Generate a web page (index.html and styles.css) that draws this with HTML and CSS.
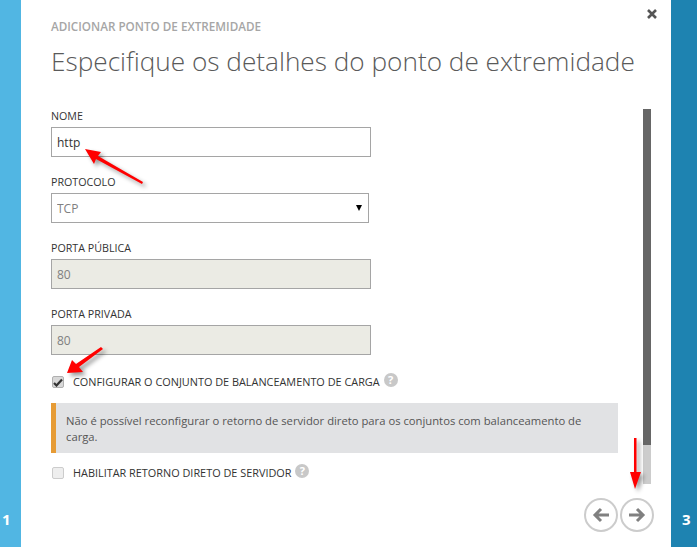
FILE: index.html
```html
<!DOCTYPE html>
<html lang="pt">
<head>
    <meta charset="UTF-8">
    <title>Adicionar ponto de extremidade</title>
    <link rel="stylesheet" href="styles.css">
</head>
<body>
    <div class="side side-left"><span class="step">1</span></div>

    <div class="dialog">
        <a class="close" href="#">
            <svg width="10" height="10" viewBox="0 0 10 10"><path d="M1 1 L9 9 M9 1 L1 9" stroke="#555" stroke-width="2.6"/></svg>
        </a>

        <div class="subtitle">ADICIONAR PONTO DE EXTREMIDADE</div>
        <h1 class="title">Especifique os detalhes do ponto de extremidade</h1>

        <div class="content">
            <div class="form">
                <label class="field-label">NOME</label>
                <input class="field" type="text" value="http">

                <label class="field-label">PROTOCOLO</label>
                <div class="select-wrap">
                    <select class="field field-select"><option>TCP</option></select>
                </div>

                <label class="field-label">PORTA PÚBLICA</label>
                <input class="field field-disabled" type="text" value="80" disabled>

                <label class="field-label">PORTA PRIVADA</label>
                <input class="field field-disabled" type="text" value="80" disabled>

                <div class="check-row check-row-first">
                    <span class="check">
                        <svg width="10" height="9" viewBox="0 0 10 9"><path d="M1 5 L3.5 7.5 L9 1.5" fill="none" stroke="#333" stroke-width="2.2"/></svg>
                    </span>
                    <span class="check-text">CONFIGURAR O CONJUNTO DE BALANCEAMENTO DE CARGA</span>
                    <span class="help">?</span>
                </div>

                <div class="notice">Não é possível reconfigurar o retorno de servidor direto para os conjuntos com balanceamento de carga.</div>

                <div class="check-row check-row-last">
                    <span class="check check-off"></span>
                    <span class="check-text">HABILITAR RETORNO DIRETO DE SERVIDOR</span>
                    <span class="help">?</span>
                </div>
            </div>
            <div class="scrollbar"><div class="scroll-thumb"></div></div>
        </div>

        <div class="nav">
            <a class="nav-btn" href="#">
                <svg width="18" height="16" viewBox="0 0 18 16"><path d="M17 8 H3 M9 2 L3 8 L9 14" fill="none" stroke="#808080" stroke-width="3"/></svg>
            </a>
            <a class="nav-btn" href="#">
                <svg width="18" height="16" viewBox="0 0 18 16"><path d="M1 8 H15 M9 2 L15 8 L9 14" fill="none" stroke="#808080" stroke-width="3"/></svg>
            </a>
        </div>
    </div>

    <div class="side side-right"><span class="step">3</span></div>

    <!-- setas vermelhas por cima da captura -->
    <svg class="marks" width="697" height="547" viewBox="0 0 697 547">
        <path d="M85 149 L101 152 L98 156 L143 182 L142 184 L96 159 L94 164 Z" fill="#f00"/>
        <path d="M67 373 L72 360 L76 364 L101 347 L103 349 L79 367 L83 372 Z" fill="#f00"/>
        <path d="M634 438 H636.500 V472 H641 L635 489 L630 472 H634 Z" fill="#f00"/>
    </svg>
</body>
</html>
```

FILE: styles.css
```css
html, body {
    margin: 0;
    padding: 0;
    height: 100%;
}

body {
    display: flex;
    height: 547px;
    overflow: hidden;
    position: relative;
    background: #fff;
    font-family: "Open Sans", sans-serif;
    color: #333;
}

.side {
    display: flex;
    align-items: flex-end;
    flex: none;
    color: #fff;
    font-weight: 700;
    font-size: 15px;
}

.side-left {
    width: 21px;
    background: #51b6e3;
    padding-left: 2px;
    box-sizing: border-box;
}

.side-right {
    width: 26px;
    background: #1e83b1;
    padding-left: 11px;
    box-sizing: border-box;
}

.step {
    line-height: 20px;
    margin-bottom: 18px;
}

.dialog {
    flex: 1;
    position: relative;
    padding: 19px 0 0 30px;
    box-sizing: border-box;
}

.close {
    position: absolute;
    top: 9px;
    right: 14px;
    line-height: 0;
}

.subtitle {
    font-size: 11.700px;
    font-weight: 600;
    line-height: 14px;
    color: #a6a6a6;
}

.title {
    margin: 10px 0 0;
    font-size: 26.200px;
    font-weight: 300;
    line-height: 36px;
    color: #5a5a5a;
    white-space: nowrap;
}

.content {
    display: flex;
    margin-top: 30px;
    height: 375px;
}

.form {
    width: 592px;
    flex: none;
}

.field-label {
    display: block;
    font-size: 10.700px;
    line-height: 14px;
    margin: 18px 0 4px;
}

.field-label:first-child {
    margin-top: 0;
}

.field {
    display: block;
    box-sizing: border-box;
    width: 320px;
    height: 30px;
    padding: 0 5px;
    border: 1px solid #a5a5a5;
    border-radius: 0;
    background: #fff;
    font-family: "Open Sans", sans-serif;
    font-size: 12px;
    color: #333;
    outline: none;
}

.select-wrap {
    position: relative;
    width: 318px;
}

.select-wrap::after {
    content: "";
    position: absolute;
    right: 7px;
    top: 12px;
    border-left: 3px solid transparent;
    border-right: 3px solid transparent;
    border-top: 6px solid #000;
}

.field-select {
    width: 318px;
    appearance: none;
    color: #808080;
}

.field-disabled {
    background: #ebebe4;
    color: #808080;
}

.check-row {
    display: flex;
    align-items: center;
    height: 14px;
    font-size: 10.880px;
    line-height: 14px;
}

.check-row-first {
    margin-top: 20px;
}

.check-row-last {
    margin-top: 13px;
}

.check {
    display: flex;
    align-items: center;
    justify-content: center;
    box-sizing: border-box;
    width: 12px;
    height: 12px;
    margin-left: 1px;
    border: 1px solid #b0b0b0;
    border-radius: 2px;
    background: #d8d8d8;
}

.check-off {
    background: #eee;
    border-color: #ccc;
}

.check-text {
    margin-left: 9px;
}

.help {
    display: inline-block;
    width: 14px;
    height: 14px;
    margin-left: 4px;
    margin-top: -4px;
    border-radius: 50%;
    background: #c8c8c8;
    color: #fff;
    font-size: 11px;
    font-weight: 700;
    line-height: 14px;
    text-align: center;
}

.notice {
    box-sizing: border-box;
    width: 567px;
    height: 50px;
    margin-top: 14px;
    padding: 10px 20px 0 10px;
    border-left: 5px solid #e69b35;
    background: #e1e2e4;
    font-size: 11.260px;
    line-height: 16px;
    color: #555;
}

.scrollbar {
    width: 8px;
    height: 375px;
    background: #ccc;
}

.scroll-thumb {
    height: 336px;
    background: #666;
}

.nav {
    display: flex;
    gap: 2px;
    margin: 14px 0 0 533px;
}

.nav-btn {
    display: flex;
    align-items: center;
    justify-content: center;
    box-sizing: border-box;
    width: 34px;
    height: 34px;
    border: 2.500px solid #ccc;
    border-radius: 50%;
}

.marks {
    position: absolute;
    left: 0;
    top: 0;
    pointer-events: none;
    filter: drop-shadow(3px 3px 2px rgba(0, 0, 0, 0.4));
}
```
